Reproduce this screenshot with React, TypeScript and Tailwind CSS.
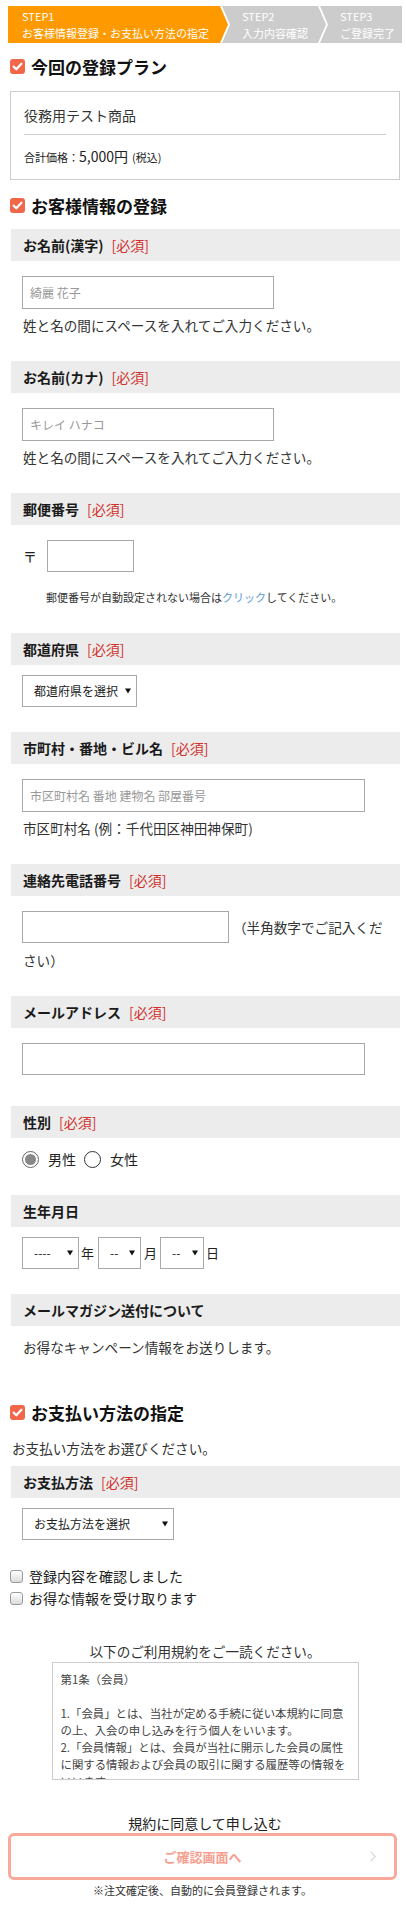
import React from "react";

const CheckIcon = () => (
  <svg width="15" height="15" viewBox="0 0 15 15" className="shrink-0">
    <rect width="15" height="15" rx="3" fill="#f26649" />
    <path
      d="M3.6 7.6 L6.3 10.3 L11.4 4.7"
      stroke="#fff"
      strokeWidth="2.2"
      fill="none"
      strokeLinecap="round"
      strokeLinejoin="round"
    />
  </svg>
);

const Tri = () => (
  <svg
    width="6"
    height="6"
    viewBox="0 0 6 6"
    className="pointer-events-none absolute right-[6px] top-1/2 -translate-y-1/2"
  >
    <path d="M0 0.5H6L3 5.5Z" fill="#111" />
  </svg>
);

function Heading({ children, className = "" }: { children: React.ReactNode; className?: string }) {
  return (
    <div className={`ml-[2px] flex h-[24px] items-center ${className}`}>
      <CheckIcon />
      <span className="ml-[6px] text-[17px] font-bold leading-none text-[#111]">{children}</span>
    </div>
  );
}

function Bar({ label, req = true, className = "" }: { label: string; req?: boolean; className?: string }) {
  return (
    <div className={`flex h-[32px] items-center bg-[#ececec] pl-[12px] text-[14px] font-bold leading-none text-[#1a1a1a] ${className}`}>
      {label}
      {req && <span className="ml-[8px] font-normal text-[#d0312d]">[必須]</span>}
    </div>
  );
}

function Sel({ w, text, className = "" }: { w: string; text: string; className?: string }) {
  return (
    <div className={`relative ${className}`}>
      <select className={`block h-[32px] ${w} appearance-none rounded-none border border-[#a9a9a9] bg-white pl-[11px] text-[12px] text-[#222] outline-none`}>
        <option>{text}</option>
      </select>
      <Tri />
    </div>
  );
}

function Radio({ checked, label }: { checked?: boolean; label: string }) {
  return (
    <label className="flex items-center">
      <span
        className={`flex h-[17px] w-[17px] items-center justify-center rounded-full border ${
          checked ? "border-[#666]" : "border-[#333]"
        } bg-white`}
      >
        {checked && <span className="h-[11px] w-[11px] rounded-full bg-[#888]" />}
      </span>
      <span className="ml-[9px] text-[14px] leading-[20px] text-[#222]">{label}</span>
    </label>
  );
}

function Check({ label }: { label: string }) {
  return (
    <label className="ml-[2px] flex h-[22px] items-center">
      <span className="h-[13px] w-[13px] rounded-[3px] border border-[#9a9a9a] bg-gradient-to-b from-white to-[#dcdcdc]" />
      <span className="ml-[6px] text-[14px] leading-[22px] text-[#222]">{label}</span>
    </label>
  );
}

const help = "ml-[12px] text-[13.6px] leading-[20px] text-[#333]";
const input =
  "block h-[33px] rounded-none border border-[#a9a9a9] bg-white px-[7px] text-[12px] text-[#333] outline-none placeholder:text-[#999]";

export default function App() {
  return (
    <div className="min-h-[1921px] w-[406px] bg-white pb-[24px] pl-[8px] pr-[4px] pt-[6px] font-['Noto_Sans_CJK_JP',sans-serif] text-[#333]">
      {/* steps */}
      <div className="flex h-[37px] text-[11px] leading-[17px] text-white">
        <div className="flex w-[220px] flex-col justify-center bg-[#ff9900] pl-[14px] [clip-path:polygon(0_0,212px_0,220px_50%,212px_100%,0_100%)]">
          <span>STEP1</span>
          <span>お客様情報登録・お支払い方法の指定</span>
        </div>
        <div className="-ml-[6px] flex w-[104px] flex-col justify-center bg-[#cccccc] pl-[20px] [clip-path:polygon(0_0,96px_0,104px_50%,96px_100%,0_100%,8px_50%)]">
          <span>STEP2</span>
          <span>入力内容確認</span>
        </div>
        <div className="-ml-[6px] flex flex-1 flex-col justify-center bg-[#cccccc] pl-[20px] [clip-path:polygon(0_0,100%_0,100%_100%,0_100%,8px_50%)]">
          <span>STEP3</span>
          <span>ご登録完了</span>
        </div>
      </div>

      <Heading className="mt-[11px]">今回の登録プラン</Heading>

      <div className="mx-[2px] mt-[13px] border border-[#cccccc] px-[13px] pb-[13px] pt-[13px]">
        <div className="text-[14px] leading-[20px] text-[#333]">役務用テスト商品</div>
        <div className="mt-[9px] border-t border-[#cccccc]" />
        <div className="mt-[11px] flex h-[20px] items-baseline text-[#222]">
          <span className="text-[11px]">合計価格：</span>
          <span className="text-[14px]">5,000円</span>
          <span className="ml-[4px] text-[11px]">(税込)</span>
        </div>
      </div>

      <Heading className="mt-[13px]">お客様情報の登録</Heading>

      <div className="ml-[3px] mr-[2px]">
        <Bar label="お名前(漢字)" className="mt-[12px]" />
        <input className={`${input} ml-[11px] mt-[15px] w-[252px]`} placeholder="綺麗 花子" />
        <p className={`${help} mt-[6px]`}>姓と名の間にスペースを入れてご入力ください。</p>

        <Bar label="お名前(カナ)" className="mt-[26px]" />
        <input className={`${input} ml-[11px] mt-[15px] w-[252px]`} placeholder="キレイ ハナコ" />
        <p className={`${help} mt-[6px]`}>姓と名の間にスペースを入れてご入力ください。</p>

        <Bar label="郵便番号" className="mt-[26px]" />
        <div className="ml-[12px] mt-[15px] flex items-center">
          <span className="text-[14px] text-[#222]">〒</span>
          <input className={`${input} ml-[10px] !h-[32px] w-[87px]`} />
        </div>
        <p className="ml-[35px] mt-[17px] text-[11px] leading-[16px] text-[#333]">
          郵便番号が自動設定されない場合は<span className="text-[#5b9bd5]">クリック</span>してください。
        </p>

        <Bar label="都道府県" className="mt-[28px]" />
        <Sel w="w-[115px]" text="都道府県を選択" className="ml-[11px] mt-[10px] w-[115px]" />

        <Bar label="市町村・番地・ビル名" className="mt-[25px]" />
        <input className={`${input} ml-[11px] mt-[15px] w-[343px]`} placeholder="市区町村名 番地 建物名 部屋番号" />
        <p className={`${help} mt-[6px]`}>市区町村名 (例：千代田区神田神保町)</p>

        <Bar label="連絡先電話番号" className="mt-[26px]" />
        <div className="ml-[11px] mt-[15px] flex items-center">
          <input className={`${input} !h-[32px] w-[207px]`} />
          <span className="ml-[4px] whitespace-nowrap text-[13.6px] leading-[20px] text-[#333]">（半角数字でご記入くだ</span>
        </div>
        <p className={`${help} mt-[7px]`}>さい）</p>

        <Bar label="メールアドレス" className="mt-[26px]" />
        <input className={`${input} ml-[11px] mt-[15px] !h-[32px] w-[343px]`} />

        <Bar label="性別" className="mt-[31px]" />
        <div className="ml-[11px] mt-[11px] flex h-[20px] items-center gap-[8px]">
          <Radio checked label="男性" />
          <Radio label="女性" />
        </div>

        <Bar label="生年月日" req={false} className="mt-[26px]" />
        <div className="ml-[11px] mt-[10px] flex items-center text-[13px] text-[#222]">
          <Sel w="w-[57px]" text="----" className="w-[57px]" />
          <span className="ml-[2px]">年</span>
          <Sel w="w-[43px]" text="--" className="ml-[4px] w-[43px]" />
          <span className="ml-[3px]">月</span>
          <Sel w="w-[44px]" text="--" className="ml-[3px] w-[44px]" />
          <span className="ml-[2px]">日</span>
        </div>

        <Bar label="メールマガジン送付について" req={false} className="mt-[25px]" />
        <p className={`${help} mt-[11px]`}>お得なキャンペーン情報をお送りします。</p>
      </div>

      <Heading className="mt-[43px]">お支払い方法の指定</Heading>
      <p className="ml-[4px] mt-[14px] text-[13.6px] leading-[20px] text-[#333]">お支払い方法をお選びください。</p>

      <div className="ml-[3px] mr-[2px]">
        <Bar label="お支払方法" className="mt-[8px]" />
        <Sel w="w-[152px]" text="お支払方法を選択" className="ml-[11px] mt-[10px] w-[152px]" />
      </div>

      <div className="mt-[25px]">
        <Check label="登録内容を確認しました" />
        <Check label="お得な情報を受け取ります" />
      </div>

      <p className="mt-[32px] text-center text-[13.6px] leading-[20px] text-[#333]">以下のご利用規約をご一読ください。</p>
      <div className="mx-auto mt-[1px] h-[118px] w-[307px] overflow-hidden border border-[#cccccc] pl-[8px] pt-[8px] text-[11.4px] leading-[17px] text-[#444]">
        <div className="whitespace-nowrap">第1条（会員）</div>
        <div className="h-[17px]" />
        <div className="whitespace-nowrap">1.「会員」とは、当社が定める手続に従い本規約に同意</div>
        <div className="whitespace-nowrap">の上、入会の申し込みを行う個人をいいます。</div>
        <div className="whitespace-nowrap">2.「会員情報」とは、会員が当社に開示した会員の属性</div>
        <div className="whitespace-nowrap">に関する情報および会員の取引に関する履歴等の情報を</div>
        <div className="whitespace-nowrap">いいます。</div>
      </div>

      <p className="mt-[33px] text-center text-[14px] leading-[20px] text-[#222]">規約に同意して申し込む</p>
      <div className="mr-[5px] flex h-[47px] items-center rounded-[6px] border-[3px] border-[#f9a99c] bg-white">
        <span className="w-[24px]" />
        <span className="flex-1 text-center text-[13px] font-bold text-[#f6a091]">ご確認画面へ</span>
        <span className="flex w-[24px] items-center">
          <svg width="6" height="11" viewBox="0 0 6 11">
            <path d="M0.7 0.7 L5.2 5.5 L0.7 10.3" stroke="#dddddd" strokeWidth="1.4" fill="none" />
          </svg>
        </span>
      </div>
      <p className="mr-[5px] mt-[2px] text-center text-[11px] leading-[16px] text-[#333]">※注文確定後、自動的に会員登録されます。</p>
    </div>
  );
}
